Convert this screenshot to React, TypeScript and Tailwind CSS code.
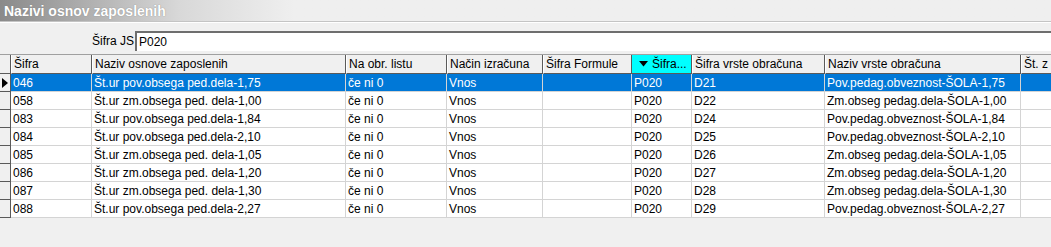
const cols = [
  { key: "sifra", label: "Šifra", w: "w-[81px]" },
  { key: "naziv", label: "Naziv osnove zaposlenih", w: "w-[254px]" },
  { key: "list", label: "Na obr. listu", w: "w-[101px]" },
  { key: "nacin", label: "Način izračuna", w: "w-[96px]" },
  { key: "formula", label: "Šifra Formule", w: "w-[89px]" },
  { key: "js", label: "Šifra...", w: "w-[60px]", sorted: true },
  { key: "vrsta", label: "Šifra vrste obračuna", w: "w-[133px]" },
  { key: "nazivVrste", label: "Naziv vrste obračuna", w: "w-[196px]" },
  { key: "st", label: "Št.  z", w: "w-[40px]" },
];

const rows = [
  ["046", "Št.ur pov.obsega ped.dela-1,75", "če ni 0", "Vnos", "", "P020", "D21", "Pov.pedag.obveznost-ŠOLA-1,75", ""],
  ["058", "Št.ur zm.obsega ped. dela-1,00", "če ni 0", "Vnos", "", "P020", "D22", "Zm.obseg pedag.dela-ŠOLA-1,00", ""],
  ["083", "Št.ur pov.obsega ped.dela-1,84", "če ni 0", "Vnos", "", "P020", "D24", "Pov.pedag.obveznost-ŠOLA-1,84", ""],
  ["084", "Št.ur pov.obsega ped.dela-2,10", "če ni 0", "Vnos", "", "P020", "D25", "Pov.pedag.obveznost-ŠOLA-2,10", ""],
  ["085", "Št.ur zm.obsega ped. dela-1,05", "če ni 0", "Vnos", "", "P020", "D26", "Zm.obseg pedag.dela-ŠOLA-1,05", ""],
  ["086", "Št.ur zm.obsega ped. dela-1,20", "če ni 0", "Vnos", "", "P020", "D27", "Zm.obseg pedag.dela-ŠOLA-1,20", ""],
  ["087", "Št.ur zm.obsega ped. dela-1,30", "če ni 0", "Vnos", "", "P020", "D28", "Zm.obseg pedag.dela-ŠOLA-1,30", ""],
  ["088", "Št.ur pov.obsega ped.dela-2,27", "če ni 0", "Vnos", "", "P020", "D29", "Pov.pedag.obveznost-ŠOLA-2,27", ""],
];

export default function App() {
  return (
    <div className="w-[1051px] h-[247px] overflow-hidden bg-[#f0f0f0] text-[12px] text-black font-['Liberation_Sans',Arial,sans-serif]">
      {/* Title */}
      <div className="h-[21px] flex items-center pl-[4px] bg-gradient-to-r from-[#8a8a8a] via-[#d8d8d8] via-[17%] to-[#efefef] to-[28%]">
        <span className="text-[14px] font-bold text-white leading-none [text-shadow:0_0_1px_#777]">
          Nazivi osnov zaposlenih
        </span>
      </div>
      <div className="h-[2px] border-t border-[#c4c4c4] border-b border-b-white" />

      {/* Filter */}
      <div className="h-[31px] flex items-center pt-[5px]">
        <span className="ml-[92px] w-[43px]">Šifra JS</span>
        <div className="flex-1 h-[20px] bg-white border-t-2 border-l-2 border-[#6e6e6e] flex items-center pl-[2px]">
          P020
        </div>
      </div>

      {/* Grid */}
      <div className="border-t border-[#a0a0a0] overflow-hidden">
        <div className="flex h-[19px] whitespace-nowrap">
          <div className="w-[11px] shrink-0 bg-[#f0f0f0] border-r border-b border-[#5a5a5a]" />
          {cols.map((c) => (
            <div
              key={c.key}
              className={`${c.w} shrink-0 overflow-hidden flex items-center pl-[2px] border-r border-b border-[#5a5a5a] ${
                c.sorted ? "bg-[#00ffff]" : "bg-[#f0f0f0] border-l border-l-white"
              }`}
            >
              {c.sorted && (
                <svg width="9" height="6" viewBox="0 0 9 6" className="ml-[5px] mr-[4px] shrink-0">
                  <path d="M0 0H9L4.5 5.5Z" fill="#000" />
                </svg>
              )}
              {c.label}
            </div>
          ))}
        </div>

        {rows.map((r, i) => {
          const sel = i === 0;
          return (
            <div key={r[0]} className="flex h-[18px] whitespace-nowrap">
              <div className="w-[11px] shrink-0 bg-[#f0f0f0] border-r border-b border-[#5a5a5a] flex items-center">
                {sel && (
                  <svg width="6" height="10" viewBox="0 0 6 10" className="ml-[2px]">
                    <path d="M0 0L6 5L0 10Z" fill="#000" />
                  </svg>
                )}
              </div>
              {cols.map((c, j) => (
                <div
                  key={c.key}
                  className={`${c.w} shrink-0 overflow-hidden flex items-center pl-[2px] border-r border-b border-[#d4d4d4] ${
                    sel ? "bg-[#0078d7] text-white" : "bg-white"
                  }`}
                >
                  {r[j]}
                </div>
              ))}
            </div>
          );
        })}
      </div>
    </div>
  );
}
